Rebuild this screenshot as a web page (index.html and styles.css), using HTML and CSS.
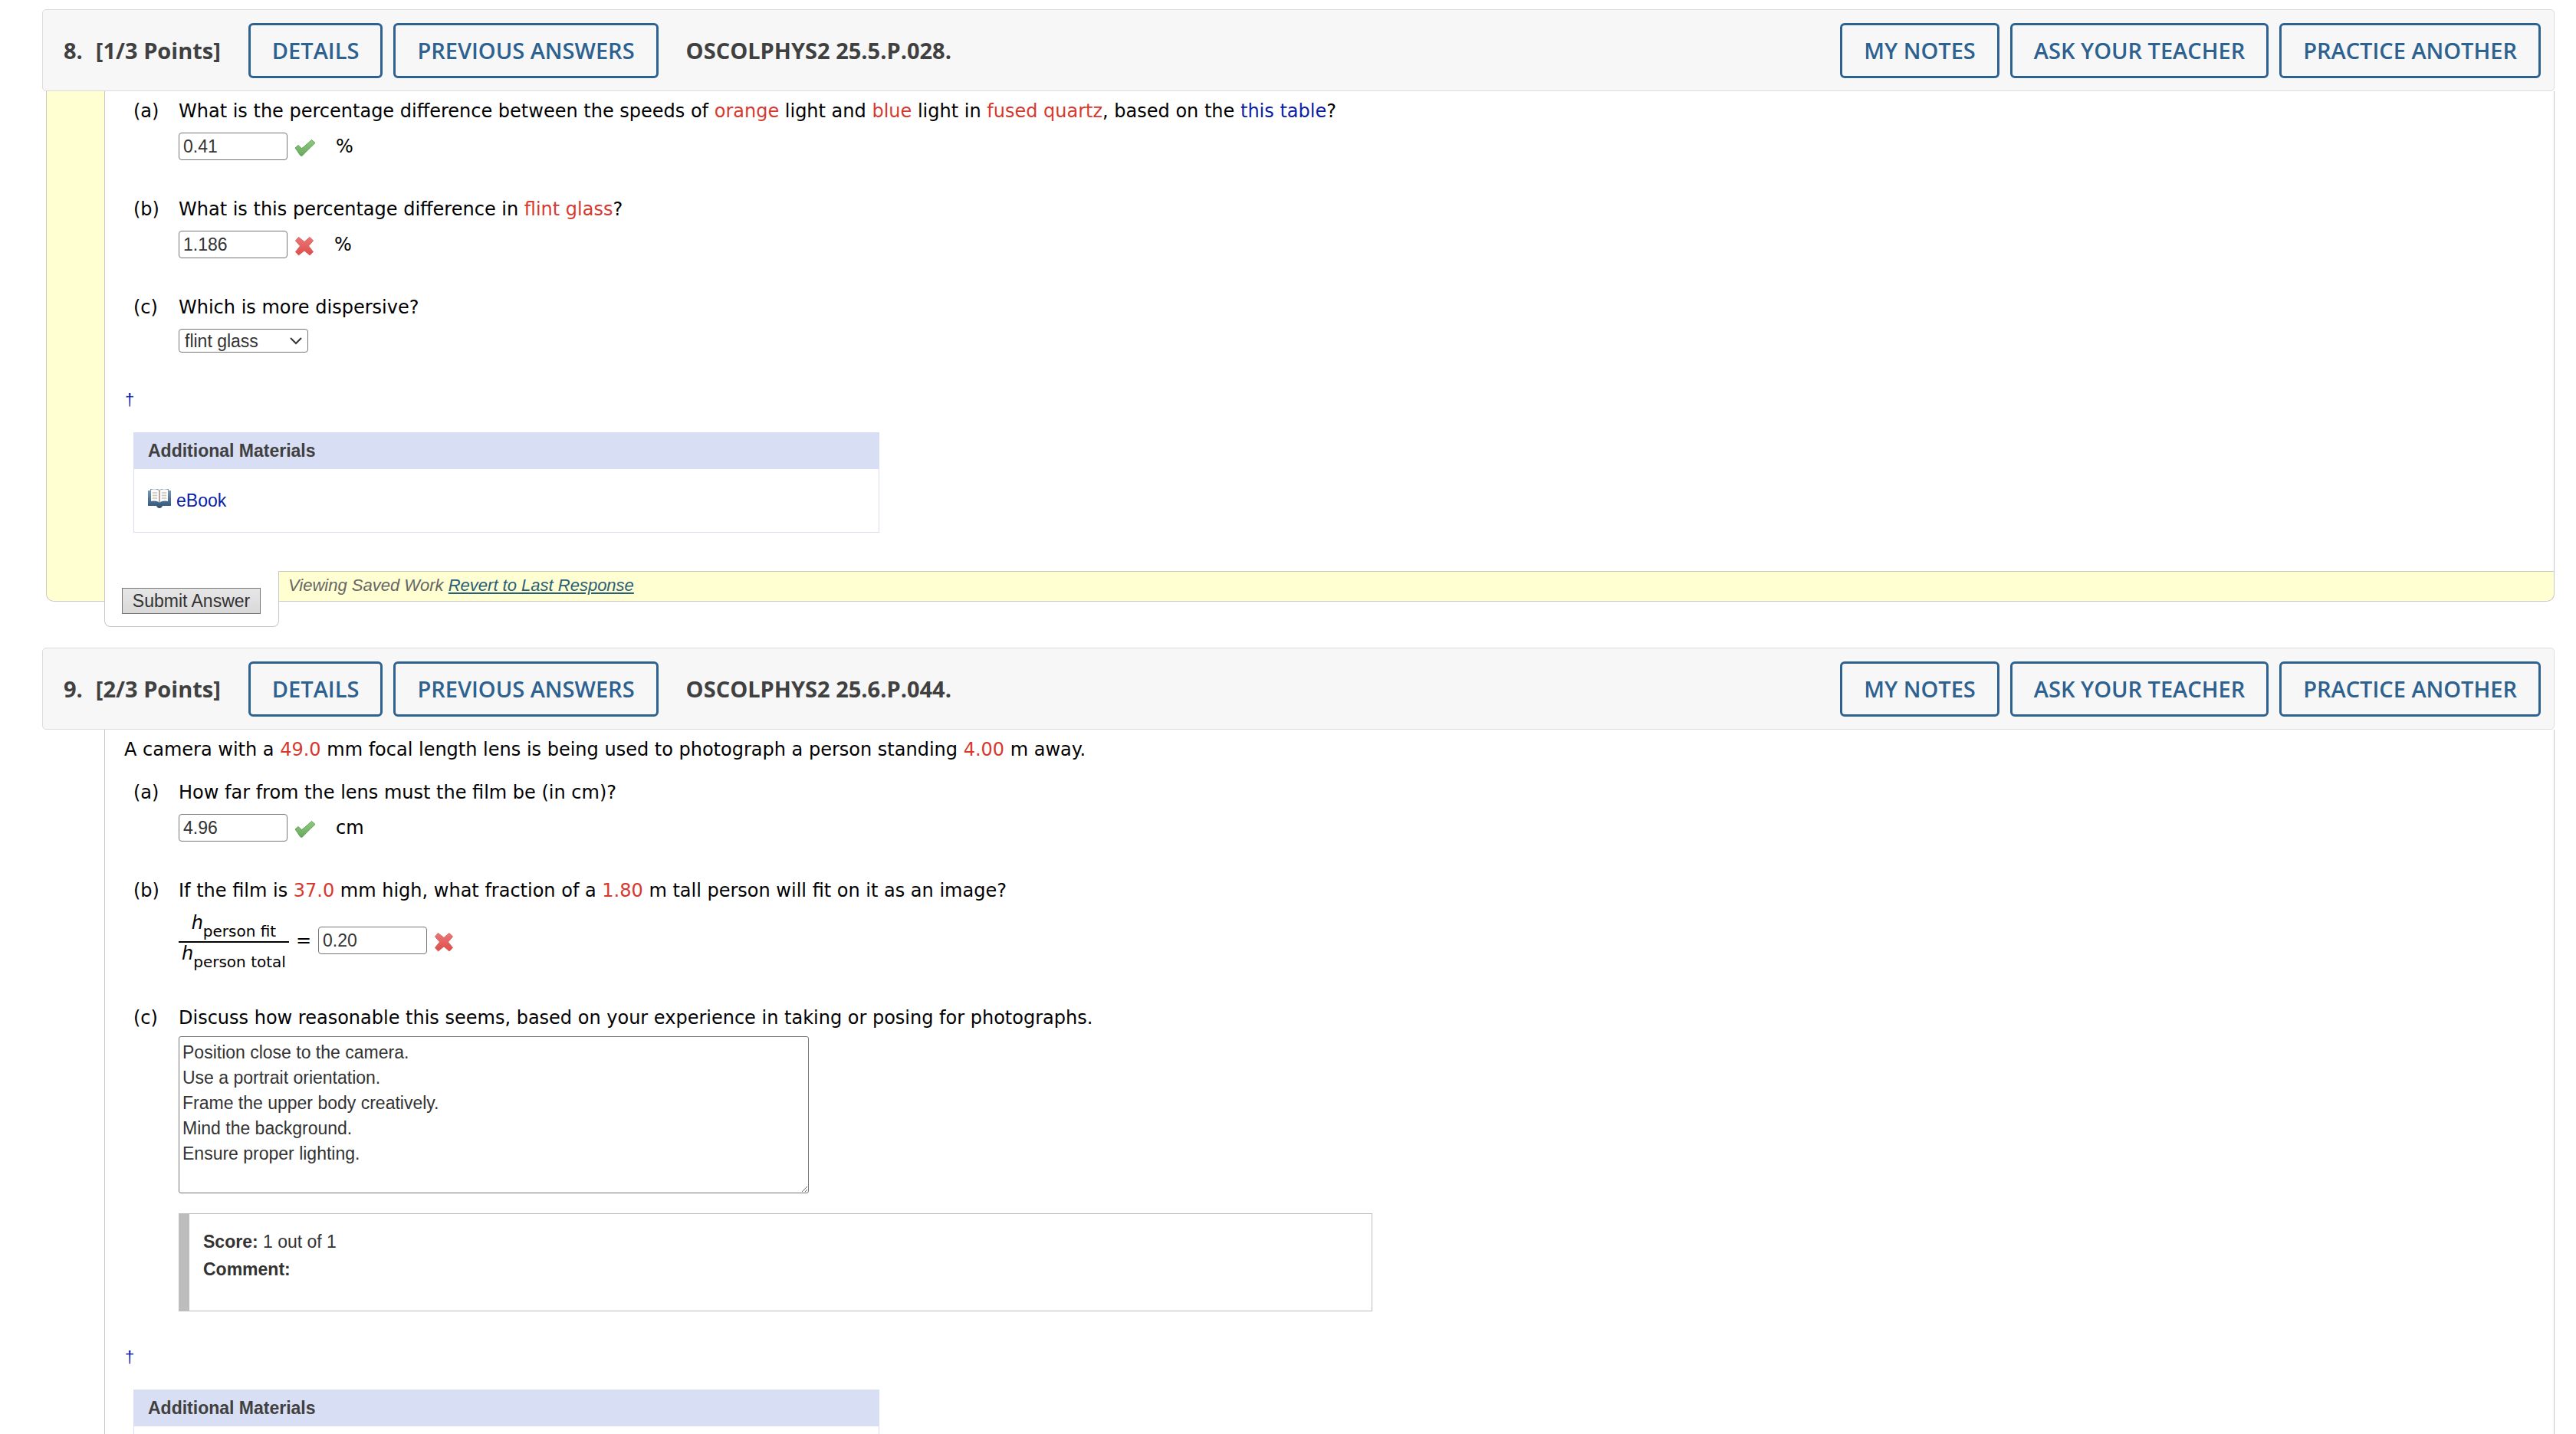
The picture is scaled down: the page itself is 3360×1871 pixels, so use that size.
FILE: index.html
```html
<!DOCTYPE html>
<html lang="en">
<head>
<meta charset="utf-8">
<title>Assignment</title>
<link rel="stylesheet" href="styles.css">
</head>
<body>
<svg class="sprite" aria-hidden="true">
  <defs>
    <linearGradient id="green" x1="0" y1="0" x2="0" y2="1"><stop offset="0" stop-color="#8ecb80"/><stop offset="1" stop-color="#68a85c"/></linearGradient>
    <linearGradient id="red" x1="0" y1="0" x2="0" y2="1"><stop offset="0" stop-color="#e8787a"/><stop offset="1" stop-color="#df4c48"/></linearGradient>
    <linearGradient id="cover" x1="0" y1="0" x2="0" y2="1"><stop offset="0" stop-color="#7d9db8"/><stop offset="1" stop-color="#2c5078"/></linearGradient>
    <symbol id="check" viewBox="0 0 28 24"><path d="M1 12L5 8.500Q9 12.500 9.500 12.500Q11 12 22.500 1.500L27 5.500Q15 17 11 21.500Q9 23.500 7.500 21.500Q4 16 1 12Z" fill="url(#green)" stroke="#609c55" stroke-width="1"/></symbol>
    <symbol id="cross" viewBox="0 0 26 26"><path d="M5.500 1.500L13 7.500L20 1.500L24.500 6L18.500 13L24.500 20.500L20 25L13 19L5.500 25L1.500 20.500L7.500 13L1.500 6Z" fill="url(#red)" stroke="#d9625f" stroke-width="1" stroke-linejoin="round"/></symbol>
    <symbol id="book" viewBox="0 0 30 26"><path d="M0 3H3V1H13L15 2.500L17 1H27V3H30V23H19Q18 26 15 26Q12 26 11 23H0Z" fill="url(#cover)"/><path d="M4 2Q10 0 14.500 3Q20 0 26 2V17Q20 15.500 15 18.500Q10 15.500 4 17Z" fill="#fbfaf7"/><path d="M15 3V18" stroke="#b3a8a0" stroke-width="2"/><path d="M6 6H12M6 9.500H12M6 13H12M18 6H24M18 9.500H24M18 13H24" stroke="#cbc5bd" stroke-width="1.500"/></symbol>
  </defs>
</svg>
<main class="page">
  <section class="question">
    <header class="bar">
      <h2 class="bar-title"><span>8.</span><span>[1/3 Points]</span></h2>
      <button class="btn">DETAILS</button>
      <button class="btn">PREVIOUS ANSWERS</button>
      <strong class="bar-code">OSCOLPHYS2 25.5.P.028.</strong>
      <div class="bar-actions">
        <button class="btn">MY NOTES</button>
        <button class="btn">ASK YOUR TEACHER</button>
        <button class="btn">PRACTICE ANOTHER</button>
      </div>
    </header>
    <div class="sheet sheet-saved">
      <div class="content">
        <div class="part">
          <span class="part-key">(a)</span>
          <label class="prompt" for="q8a">What is the percentage difference between the speeds of <em>orange</em> light and <em>blue</em> light in <em>fused quartz</em>, based on the <a href="#table">this table</a>?</label>
          <div class="answer"><input class="field" id="q8a" type="text" value="0.41"><svg class="mark mark-check" role="img" aria-label="Correct"><use href="#check"/></svg><span class="unit">%</span></div>
        </div>
        <div class="part">
          <span class="part-key">(b)</span>
          <label class="prompt" for="q8b">What is this percentage difference in <em>flint glass</em>?</label>
          <div class="answer"><input class="field" id="q8b" type="text" value="1.186"><svg class="mark mark-cross" role="img" aria-label="Incorrect"><use href="#cross"/></svg><span class="unit">%</span></div>
        </div>
        <div class="part">
          <span class="part-key">(c)</span>
          <label class="prompt" for="q8c">Which is more dispersive?</label>
          <div class="answer"><span class="picker"><select class="select" id="q8c"><option>flint glass</option><option>fused quartz</option></select><svg class="chevron" viewBox="0 0 18 12" aria-hidden="true"><path d="M2 2L9 9L16 2" fill="none" stroke="#333" stroke-width="2"/></svg></span></div>
        </div>
        <a class="dagger" href="#note8">†</a>
        <div class="materials">
          <h3 class="materials-title">Additional Materials</h3>
          <div class="materials-body"><a class="ebook" href="#ebook"><svg class="book" aria-hidden="true"><use href="#book"/></svg>eBook</a></div>
        </div>
      </div>
      <footer class="foot">
        <div class="submit-tab"><button class="submit">Submit Answer</button></div>
        <p class="status">Viewing Saved Work <a href="#revert">Revert to Last Response</a></p>
      </footer>
    </div>
  </section>

  <section class="question question-last">
    <header class="bar">
      <h2 class="bar-title"><span>9.</span><span>[2/3 Points]</span></h2>
      <button class="btn">DETAILS</button>
      <button class="btn">PREVIOUS ANSWERS</button>
      <strong class="bar-code">OSCOLPHYS2 25.6.P.044.</strong>
      <div class="bar-actions">
        <button class="btn">MY NOTES</button>
        <button class="btn">ASK YOUR TEACHER</button>
        <button class="btn">PRACTICE ANOTHER</button>
      </div>
    </header>
    <div class="sheet">
      <div class="content">
        <p class="intro">A camera with a <em>49.0</em> mm focal length lens is being used to photograph a person standing <em>4.00</em> m away.</p>
        <div class="part">
          <span class="part-key">(a)</span>
          <label class="prompt" for="q9a">How far from the lens must the film be (in cm)?</label>
          <div class="answer"><input class="field" id="q9a" type="text" value="4.96"><svg class="mark mark-check" role="img" aria-label="Correct"><use href="#check"/></svg><span class="unit">cm</span></div>
        </div>
        <div class="part">
          <span class="part-key">(b)</span>
          <label class="prompt" for="q9b">If the film is <em>37.0</em> mm high, what fraction of a <em>1.80</em> m tall person will fit on it as an image?</label>
          <div class="answer">
            <span class="ratio"><span class="ratio-term"><i>h</i><sub>person fit</sub></span><span class="ratio-term"><i>h</i><sub>person total</sub></span></span>
            <span class="equals">=</span>
            <input class="field" id="q9b" type="text" value="0.20"><svg class="mark mark-cross" role="img" aria-label="Incorrect"><use href="#cross"/></svg>
          </div>
        </div>
        <div class="part part-essay">
          <span class="part-key">(c)</span>
          <label class="prompt" for="q9c">Discuss how reasonable this seems, based on your experience in taking or posing for photographs.</label>
          <div class="answer answer-essay">
            <textarea class="essay" id="q9c">Position close to the camera.
Use a portrait orientation.
Frame the upper body creatively.
Mind the background.
Ensure proper lighting.</textarea>
            <div class="score"><p><b>Score:</b> 1 out of 1</p><p><b>Comment:</b></p></div>
          </div>
        </div>
        <a class="dagger" href="#note9">†</a>
        <div class="materials materials-open">
          <h3 class="materials-title">Additional Materials</h3>
        </div>
      </div>
    </div>
  </section>
</main>
</body>
</html>
```
FILE: styles.css
```css
:root {
  --blue: #2d6190;
  --link: #0a1ea8;
  --line: #c8c8c8;
  --sans: "Liberation Sans", Arial, sans-serif;
}

* { box-sizing: border-box; }

body {
  margin: 0;
  background: #fff;
  color: #000;
  font: 24px/28px "DejaVu Sans", Verdana, sans-serif;
}

p, h2, h3 { margin: 0; }
a { color: var(--link); text-decoration: none; }
.sprite { position: absolute; width: 0; height: 0; }

.page {
  display: flex;
  flex-direction: column;
  gap: 60px;
  min-height: 100vh;
  padding: 12px 28px 0 55px;
}

/* The last question runs to the foot of the page */
.question-last { display: flex; flex: 1; flex-direction: column; }
.question-last .sheet { display: flex; flex: 1; }
.question-last .content { flex: 1; padding-bottom: 0; }

/* Title bar */
.bar {
  display: flex;
  align-items: center;
  gap: 14px;
  padding: 17px 17px 16px 27px;
  background: #f7f7f7;
  border: 1px solid #dcdcdc;
  border-radius: 5px;
  color: #404040;
  font-family: "Open Sans", sans-serif;
}
.bar-title {
  display: flex;
  gap: 17px;
  margin-right: 22px;
  font-size: 29px;
  font-weight: 700;
}
.bar-code { margin-left: 22px; font-size: 29px; font-weight: 700; }
.bar-actions { display: flex; gap: 14px; margin-left: auto; }

.btn {
  height: 72px;
  padding: 0 28px;
  border: 3px solid var(--blue);
  border-radius: 6px;
  background: transparent;
  color: var(--blue);
  font: 600 29px/38px "Open Sans", sans-serif;
}

/* Question sheet */
.sheet {
  margin-left: 5px;
  padding-left: 76px;
  border-right: 1px solid var(--line);
}
.sheet-saved {
  padding-left: 75px;
  background: #ffffd2;
  border: 1px solid var(--line);
  border-top: 0;
  border-radius: 0 0 10px 10px;
}
.content {
  display: flex;
  flex-direction: column;
  align-items: flex-start;
  padding: 12px 25px 50px 37px;
  background: #fff;
  border-left: 1px solid var(--line);
}

.intro { margin: 0 0 28px -12px; }
em { color: #d63a2f; font-style: normal; }

.part {
  display: grid;
  grid-template-columns: 59px auto;
  row-gap: 14px;
  margin-bottom: 50px;
}
.answer { display: flex; grid-column: 2; align-items: center; }

.field {
  width: 142px;
  height: 36px;
  padding: 0 5px;
  border: 1px solid #767676;
  border-radius: 4px;
  background: #fff;
  color: #333;
  font: 23px/28px var(--sans);
}
.mark { flex: none; margin: 4px 0 0 9px; }
.mark-check { width: 28px; height: 24px; }
.mark-cross { width: 26px; height: 26px; }
.unit { margin-left: 26px; }

.picker { display: grid; align-items: center; }
.picker > * { grid-area: 1 / 1; }
.select {
  appearance: none;
  width: 169px;
  height: 31px;
  padding: 0 7px;
  border: 1px solid #767676;
  border-radius: 4px;
  background: #fff;
  color: #333;
  font: 23px/28px var(--sans);
}
.chevron { justify-self: end; width: 18px; height: 12px; margin-right: 7px; pointer-events: none; }

.ratio { display: flex; flex-direction: column; }
.ratio-term { height: 34px; padding: 0 4px; text-align: center; }
.ratio-term:first-child { height: 40px; border-bottom: 2px solid #000; }
.ratio sub { font-size: 20px; line-height: 0; vertical-align: -10px; }
.equals { margin: 0 9px; }

.part-essay { row-gap: 10px; margin-bottom: 48px; }
.answer-essay { flex-direction: column; align-items: flex-start; gap: 26px; }
.essay {
  width: 822px;
  height: 205px;
  padding: 4px;
  border: 1px solid #767676;
  border-radius: 3px;
  background: #fff;
  color: #333;
  font: 23px/33px var(--sans);
}
.score {
  width: 1557px;
  height: 128px;
  padding: 18px;
  border: 1px solid #bdbdbd;
  border-left-width: 14px;
  color: #333;
  font: 23px/36px var(--sans);
}

.dagger { margin: 0 0 30px -11px; font: 22px/24px var(--sans); }

.materials {
  width: 973px;
  border: 1px solid #d8ddf2;
  color: #404040;
  font-family: var(--sans);
}
.materials-open { flex: 1; border-bottom: 0; }
.materials-title {
  padding: 9px 18px 10px;
  background: #d8def3;
  font-size: 23px;
  line-height: 28px;
}
.materials-body { height: 82px; padding: 24px 18px; font-size: 23px; line-height: 34px; }
.ebook { display: inline-flex; align-items: center; gap: 7px; }
.book { width: 30px; height: 26px; margin-bottom: 6px; }

/* Submit tab hangs below the saved-work strip */
.foot { display: flex; height: 39px; }
.submit-tab {
  flex: none;
  margin-bottom: -34px;
  padding: 22px 23px 15px 22px;
  background: #fff;
  border: 1px solid var(--line);
  border-top: 0;
  border-radius: 0 0 8px 8px;
}
.submit {
  display: block;
  width: 181px;
  height: 34px;
  padding: 0;
  border: 1px solid #767676;
  background: linear-gradient(#e6e6e6, #d9d9d9);
  color: #333;
  font: 23px/28px var(--sans);
}
.status {
  flex: 1;
  padding: 4px 12px;
  border-top: 1px solid var(--line);
  color: #666;
  font: italic 22px/28px var(--sans);
}
.status a { color: #2a5f78; text-decoration: underline; }
```
